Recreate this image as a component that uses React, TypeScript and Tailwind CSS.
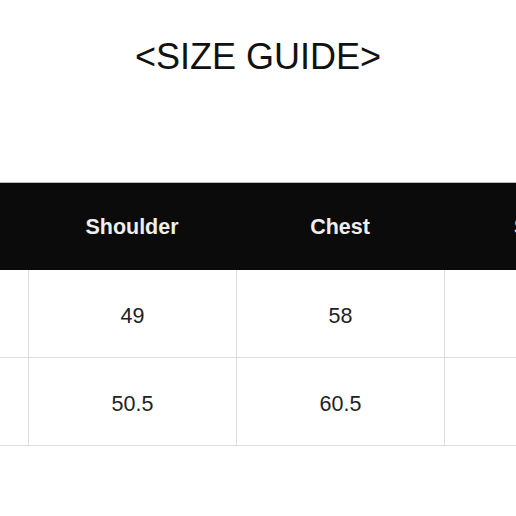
import React from "react";

const cols = ["Size", "Shoulder", "Chest", "Sleeve", "Length"];
const rows = [
  ["M", "49", "58", "", ""],
  ["L", "50.5", "60.5", "", ""],
];

export default function App() {
  return (
    <div className="w-[516px] h-[516px] bg-white overflow-hidden" style={{ fontFamily: "Arial, 'Liberation Sans', sans-serif" }}>
      <div className="h-[115px] pt-[34px] text-center text-[36px] leading-[46px] text-[#111]">&lt;SIZE GUIDE&gt;</div>
      <div className="mt-[67px] ml-[-180px] w-[1040px] border-t border-[#bbb]">
        <div className="grid grid-cols-5 h-[87px] bg-[#0b0b0b] items-center">
          {cols.map((c) => (
            <div key={c} className="text-center pt-[2px] text-[21.5px] font-bold text-[#eee]">
              {c === "Size" || c === "Length" ? "" : c}
            </div>
          ))}
        </div>
        {rows.map((r, i) => (
          <div key={i} className="grid grid-cols-5 h-[88px] border-b border-[#ddd]">
            {r.map((v, j) => (
              <div
                key={j}
                className="flex items-center justify-center pt-[5px] text-[21.5px] text-[#222] border-l border-[#ddd]"
              >
                {j === 0 ? "" : v}
              </div>
            ))}
          </div>
        ))}
      </div>
    </div>
  );
}
